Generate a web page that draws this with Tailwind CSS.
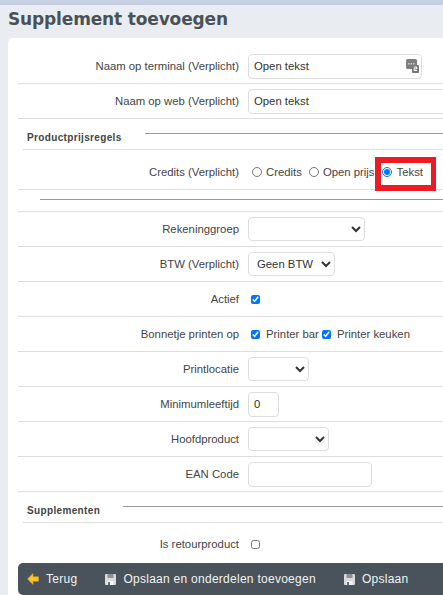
<!doctype html>
<html lang="nl"><head><meta charset="utf-8"><script src="https://cdn.jsdelivr.net/npm/@tailwindcss/browser@4"></script></head>
<body class="m-0 overflow-hidden bg-[#e9edf1]">
<div class="relative w-[443px] h-[595px] overflow-hidden font-['Liberation_Sans',Arial,sans-serif] text-[11.33px] text-[#444]">
  <div class="h-[5px] bg-[#c6d0e2]"></div>
  <h1 class="h-[33px] pl-2 pt-[3px] font-['DejaVu_Sans',sans-serif] font-bold text-[17px] leading-[22px] tracking-[-0.15px] text-[#4b5158]">Supplement toevoegen</h1>
  <div class="ml-2 h-[557px] bg-white rounded-tl-[5px] pl-[10px] pt-[11px] overflow-hidden">
    <div class="flex items-center h-[35px] border-b border-[#ddd]">
      <label class="w-[221px] shrink-0 text-right">Naam op terminal (Verplicht)</label>
      <div class="ml-[9px] relative">
        <input value="Open tekst" class="w-[174px] h-[25px] border border-[#ddd] rounded-[4px] px-[5px] text-[#333] outline-none">
        <svg class="absolute right-[3px] top-[5px]" width="13" height="14" viewBox="0 0 13 14"><rect x="0" y="0" width="11" height="10" rx="1.5" fill="#7f7f7f"/><rect x="2" y="4" width="1.5" height="1.5" fill="#ccc"/><rect x="4.5" y="4" width="1.5" height="1.5" fill="#ccc"/><rect x="7" y="4" width="1.5" height="1.5" fill="#ccc"/><rect x="6" y="6" width="7" height="8" rx="1" fill="#777"/><path d="M7.8 8h3v1.8h-2.8v1.6h3" fill="none" stroke="#fff" stroke-width="1"/></svg>
      </div>
    </div>
    <div class="flex items-center h-[35px] border-b border-[#ddd]">
      <label class="w-[221px] shrink-0 text-right">Naam op web (Verplicht)</label>
      <input value="Open tekst" class="ml-[9px] w-[300px] h-[25px] shrink-0 border border-[#ddd] rounded-[4px] px-[5px] text-[#333] outline-none">
    </div>
    <div class="relative ml-[5px] h-[31px] border-b border-[#ddd] flex items-end pb-[4px] pl-[4px]">
      <span class="font-bold text-[10px] tracking-[0.35px] leading-[14px]">Productprijsregels</span>
      <div class="absolute left-[122px] right-0 top-[14px] h-px bg-[#999]"></div>
    </div>
    <div class="flex items-center h-[40px] pt-[5px] border-b border-[#ddd] box-border">
      <label class="w-[221px] shrink-0 text-right">Credits (Verplicht)</label>
      <div class="ml-[13px] flex items-center whitespace-nowrap">
        <input type="radio" name="c" class="m-0 w-[10px] h-[10px] mr-[4px]"><span>Credits</span>
        <input type="radio" name="c" class="m-0 ml-[7px] w-[10px] h-[10px] mr-[4px]"><span>Open prijs</span>
        <input type="radio" name="c" checked class="m-0 ml-[7px] w-[10px] h-[10px] mr-[5px]"><span>Tekst</span>
      </div>
    </div>
    <div class="h-[22px] border-b border-[#ddd] pt-[9px] pl-[22px]"><div class="h-px bg-[#999]"></div></div>
    <div class="flex items-center h-[35px] border-b border-[#ddd]">
      <label class="w-[221px] shrink-0 text-right">Rekeninggroep</label>
      <select class="ml-[9px] w-[117px] h-[24px] border border-[#ddd] rounded-[4px] bg-white text-[#333] pl-[4px] pr-[3px]"><option></option></select>
    </div>
    <div class="flex items-center h-[35px] border-b border-[#ddd]">
      <label class="w-[221px] shrink-0 text-right">BTW (Verplicht)</label>
      <select class="ml-[9px] w-[87px] h-[24px] border border-[#ddd] rounded-[4px] bg-white text-[#333] pl-[4px] pr-[3px]"><option>Geen BTW</option></select>
    </div>
    <div class="flex items-center h-[35px] border-b border-[#ddd]">
      <label class="w-[221px] shrink-0 text-right">Actief</label>
      <input type="checkbox" checked class="m-0 ml-[12px] w-[9px] h-[9px]">
    </div>
    <div class="flex items-center h-[35px] border-b border-[#ddd] whitespace-nowrap">
      <label class="w-[221px] shrink-0 text-right">Bonnetje printen op</label>
      <input type="checkbox" checked class="m-0 ml-[12px] w-[9px] h-[9px]"><span class="ml-[6px]">Printer bar</span>
      <input type="checkbox" checked class="m-0 ml-[3px] w-[9px] h-[9px]"><span class="ml-[6px]">Printer keuken</span>
    </div>
    <div class="flex items-center h-[35px] border-b border-[#ddd]">
      <label class="w-[221px] shrink-0 text-right">Printlocatie</label>
      <select class="ml-[9px] w-[61px] h-[24px] border border-[#ddd] rounded-[4px] bg-white text-[#333] pr-[3px]"><option></option></select>
    </div>
    <div class="flex items-center h-[35px] border-b border-[#ddd]">
      <label class="w-[221px] shrink-0 text-right">Minimumleeftijd</label>
      <input value="0" class="ml-[9px] w-[31px] h-[25px] border border-[#ddd] rounded-[4px] px-[5px] text-[#333] outline-none">
    </div>
    <div class="flex items-center h-[35px] border-b border-[#ddd]">
      <label class="w-[221px] shrink-0 text-right">Hoofdproduct</label>
      <select class="ml-[9px] w-[81px] h-[24px] border border-[#ddd] rounded-[4px] bg-white text-[#333] pr-[3px]"><option></option></select>
    </div>
    <div class="flex items-center h-[35px] border-b border-[#ddd]">
      <label class="w-[221px] shrink-0 text-right">EAN Code</label>
      <input class="ml-[9px] w-[124px] h-[25px] border border-[#ddd] rounded-[4px] px-[5px] outline-none">
    </div>
    <div class="relative ml-[5px] h-[31px] border-b border-[#ddd] flex items-end pb-[4px] pl-[4px]">
      <span class="font-bold text-[10px] tracking-[0.35px] leading-[14px]">Supplementen</span>
      <div class="absolute left-[100px] right-0 top-[14px] h-px bg-[#999]"></div>
    </div>
    <div class="flex items-center h-[40px] pt-[3px] box-border">
      <label class="w-[221px] shrink-0 text-right">Is retourproduct</label>
      <input type="checkbox" class="m-0 ml-[12px] w-[9px] h-[9px]">
    </div>
    <div class="h-[32px] bg-[#4a535b] rounded-l-[5px] flex items-center text-[12px] tracking-[0.27px] text-[#f0f2f4] whitespace-nowrap">
      <svg class="ml-[9px]" width="12" height="12" viewBox="0 0 12 12"><path d="M6 0.5 0.5 6 6 11.5V8.2H11.5V3.8H6Z" fill="#f7c531" stroke="#e0a010" stroke-width="0.5"/></svg>
      <span class="ml-[7px]">Terug</span>
      <svg class="ml-[28px]" width="11" height="11" viewBox="0 0 11 11"><rect width="11" height="11" rx="1" fill="#d8dadc"/><rect x="2.5" y="0" width="6" height="4" fill="#8c9196"/><rect x="2.5" y="7" width="6" height="4" fill="#f4f5f6"/><rect x="3" y="8" width="2" height="3" fill="#6b7075"/></svg>
      <span class="ml-[7px]">Opslaan en onderdelen toevoegen</span>
      <svg class="ml-[28px]" width="11" height="11" viewBox="0 0 11 11"><rect width="11" height="11" rx="1" fill="#d8dadc"/><rect x="2.5" y="0" width="6" height="4" fill="#8c9196"/><rect x="2.5" y="7" width="6" height="4" fill="#f4f5f6"/><rect x="3" y="8" width="2" height="3" fill="#6b7075"/></svg>
      <span class="ml-[7px]">Opslaan</span>
    </div>
  </div>
  <div class="absolute left-[375px] top-[157px] w-[61px] h-[34px] border-[6px] border-r-[5px] border-[#ed1c24]"></div>
</div>
</body></html>
